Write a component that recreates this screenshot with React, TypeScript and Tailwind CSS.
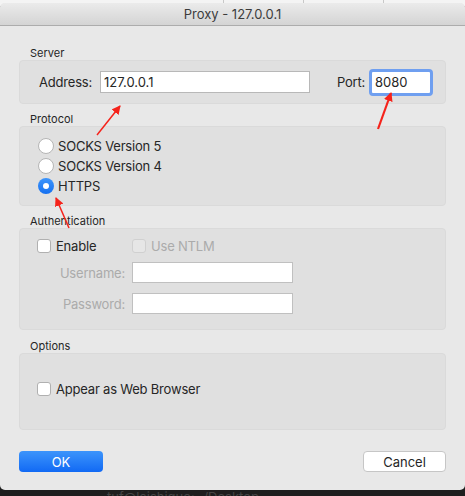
import React from "react";

const font = { fontFamily: '"Inter", "Liberation Sans", sans-serif' };

function Radio({ checked, label }: { checked?: boolean; label: string }) {
  return (
    <div className="flex items-center h-[20px]">
      {checked ? (
        <span className="w-[16px] h-[16px] rounded-full bg-gradient-to-b from-[#3d95fb] to-[#1570f0] flex items-center justify-center">
          <span className="w-[6px] h-[6px] rounded-full bg-white" />
        </span>
      ) : (
        <span className="w-[16px] h-[16px] rounded-full bg-white border border-[#b5b5b5]" />
      )}
      <span className="ml-[4px] text-[13px] leading-[20px] tracking-[-0.2px] text-[#262626]">{label}</span>
    </div>
  );
}

function Check({ label, disabled }: { label: string; disabled?: boolean }) {
  return (
    <div className="flex items-center h-[20px]">
      <span
        className={
          disabled
            ? "w-[14px] h-[14px] rounded-[3px] bg-[#e6e6e6] border border-[#d0d0d0]"
            : "w-[14px] h-[14px] rounded-[3px] bg-white border border-[#b0b0b0]"
        }
      />
      <span
        className={
          disabled
            ? "ml-[5px] text-[13px] leading-[20px] tracking-[-0.2px] text-[#ababab]"
            : "ml-[5px] text-[13px] leading-[20px] tracking-[-0.2px] text-[#262626]"
        }
      >
        {label}
      </span>
    </div>
  );
}

export default function App() {
  return (
    <div className="relative w-[465px] h-[496px] bg-[#1e1e1e] overflow-hidden" style={font}>
      {/* background strip at top */}
      <div className="absolute left-0 top-0 w-[465px] h-[6px] bg-[#f4f4f4]">
        <div className="absolute left-[223px] top-0 w-px h-[4px] bg-[#c8c8c8]" />
        <div className="absolute left-[303px] top-0 w-px h-[4px] bg-[#c8c8c8]" />
        <div className="absolute left-[383px] top-0 w-px h-[4px] bg-[#c8c8c8]" />
      </div>
      {/* faint terminal text below */}
      <div className="absolute left-[107px] top-[489px] text-[13px] leading-[16px] text-[#444]">tuf@laishiguo:~/Desktop</div>

      <div className="relative mt-[3px] w-[465px] h-[487px] bg-[#e8e8e8] rounded-[5px] overflow-hidden flex flex-col">
        <div className="h-[23px] shrink-0 bg-gradient-to-b from-[#ebebeb] to-[#d4d4d4] border-b border-[#acacac] flex items-center justify-center text-[13px] leading-[16px] text-[#3c3c3c]">
          Proxy - 127.0.0.1
        </div>

        <div className="flex flex-col px-[19px] pt-[21px]">
          {/* Server */}
          <div className="h-[13px] text-[11px] text-[#262626] pl-[11px] leading-[13px]">Server</div>
          <div className="h-[44px] rounded-[4px] bg-[#e0e0e0] border border-[#dadada] flex items-center pl-[19px] pr-[12px]">
            <span className="text-[13px] leading-[20px] tracking-[-0.2px] text-[#262626]">Address:</span>
            <div className="ml-[8px] w-[210px] h-[22px] bg-white border border-[#b8b8b8] flex items-center pl-[3px] text-[13px] leading-[20px] text-[#262626]">
              127.0.0.1
            </div>
            <span className="ml-auto text-[13px] leading-[20px] tracking-[-0.2px] text-[#262626]">Port:</span>
            <div className="ml-[4px] w-[64px] h-[27px] rounded-[4px] border-[3px] border-[#6f9ff0] bg-white flex items-center pl-[3px] text-[13px] leading-[20px] text-[#262626]">
              8080
            </div>
          </div>

          {/* Protocol */}
          <div className="mt-[9px] h-[13px] text-[11px] text-[#262626] pl-[11px] leading-[13px]">Protocol</div>
          <div className="h-[80px] rounded-[4px] bg-[#e0e0e0] border border-[#dadada] flex flex-col pl-[18px] pt-[9px]">
            <Radio label="SOCKS Version 5" />
            <Radio label="SOCKS Version 4" />
            <Radio checked label="HTTPS" />
          </div>

          {/* Authentication */}
          <div className="mt-[9px] h-[13px] text-[11px] text-[#262626] pl-[11px] leading-[13px]">Authentication</div>
          <div className="h-[102px] rounded-[4px] bg-[#e0e0e0] border border-[#dadada] flex flex-col pl-[17px] pt-[7px]">
            <div className="flex items-center">
              <div className="w-[95px]">
                <Check label="Enable" />
              </div>
              <Check disabled label="Use NTLM" />
            </div>
            <div className="mt-[6px] flex items-center">
              <span className="w-[95px] pr-[7px] text-right text-[13px] leading-[20px] tracking-[-0.2px] text-[#ababab]">Username:</span>
              <div className="w-[161px] h-[21px] bg-white border border-[#c0c0c0]" />
            </div>
            <div className="mt-[10px] flex items-center">
              <span className="w-[95px] pr-[7px] text-right text-[13px] leading-[20px] tracking-[-0.2px] text-[#ababab]">Password:</span>
              <div className="w-[161px] h-[21px] bg-white border border-[#c0c0c0]" />
            </div>
          </div>

          {/* Options */}
          <div className="mt-[10px] h-[13px] text-[11px] text-[#262626] pl-[11px] leading-[13px]">Options</div>
          <div className="h-[77px] rounded-[4px] bg-[#e0e0e0] border border-[#dadada] flex flex-col pl-[17px] pt-[25px]">
            <Check label="Appear as Web Browser" />
          </div>

          {/* Buttons */}
          <div className="mt-[21px] flex justify-between">
            <div className="w-[84px] h-[21px] rounded-[4px] bg-gradient-to-b from-[#3c94fb] to-[#1169f4] flex items-center justify-center text-[13px] leading-[20px] text-white">
              OK
            </div>
            <div className="w-[83px] h-[21px] rounded-[4px] bg-white border border-[#c6c6c6] flex items-center justify-center text-[13px] leading-[20px] text-[#262626]">
              Cancel
            </div>
          </div>
        </div>
      </div>

      {/* annotation arrows */}
      <svg className="absolute left-0 top-0" width="465" height="496" viewBox="0 0 465 496">
        <defs>
          <marker id="ah" markerWidth="9" markerHeight="9" refX="8" refY="4.5" orient="auto" markerUnits="userSpaceOnUse">
            <path d="M0,0 L9,4.5 L0,9 Z" fill="#f5231b" />
          </marker>
        </defs>
        <line x1="97" y1="135" x2="120" y2="106" stroke="#f5231b" strokeWidth="1.5" markerEnd="url(#ah)" />
        <line x1="378" y1="129" x2="391" y2="93" stroke="#f5231b" strokeWidth="2.2" markerEnd="url(#ah)" />
        <line x1="69" y1="228" x2="56" y2="198" stroke="#f5231b" strokeWidth="1.5" markerEnd="url(#ah)" />
      </svg>
    </div>
  );
}
